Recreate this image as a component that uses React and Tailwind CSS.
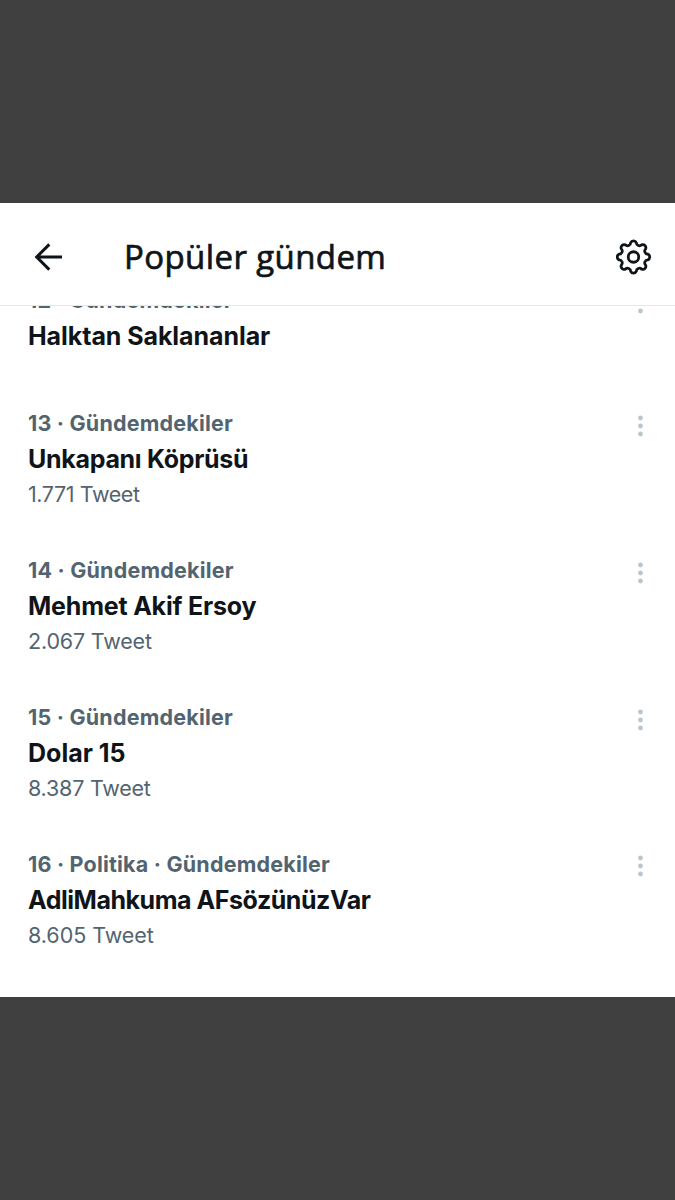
import React from 'react';

const trends = [
  { rank: '12 · Gündemdekiler', name: 'Halktan Saklananlar', nameTracking: 'tracking-[-0.07px]' },
  { rank: '13 · Gündemdekiler', name: 'Unkapanı Köprüsü', count: '1.771 Tweet', nameTracking: 'tracking-[-0.3px]', countTracking: 'tracking-[-0.4px]' },
  { rank: '14 · Gündemdekiler', name: 'Mehmet Akif Ersoy', count: '2.067 Tweet', nameTracking: 'tracking-[-0.2px]', countTracking: 'tracking-[-0.18px]' },
  { rank: '15 · Gündemdekiler', name: 'Dolar 15', count: '8.387 Tweet', nameTracking: 'tracking-[0px]', countTracking: 'tracking-[-0.22px]' },
  { rank: '16 · Politika · Gündemdekiler', name: 'AdliMahkuma AFsözünüzVar', count: '8.605 Tweet', nameTracking: 'tracking-[-0.46px]', countTracking: 'tracking-[-0.05px]' },
];

const BackIcon = () => (
  <svg className="w-7 h-7 shrink-0" viewBox="0 0 28 28" fill="none" stroke="#0f1419" strokeWidth="3">
    <path d="M15.3 1.4 2.7 14l12.6 12.6M2.7 14H28" />
  </svg>
);

const GearIcon = () => (
  <svg className="w-9 h-9 shrink-0" viewBox="-17 -17.5 35 35" fill="none" stroke="#0f1419" strokeWidth="2.7">
    <path
      strokeLinejoin="round"
      d="M13.93-2.77A3 3 0 0 1 13.93 2.77A3 3 0 0 0 11.81 7.89A3 3 0 0 1 7.89 11.81A3 3 0 0 0 2.77 13.93A3 3 0 0 1-2.77 13.93A3 3 0 0 0-7.89 11.81A3 3 0 0 1-11.81 7.89A3 3 0 0 0-13.93 2.77A3 3 0 0 1-13.93-2.77A3 3 0 0 0-11.81-7.89A3 3 0 0 1-7.89-11.81A3 3 0 0 0-2.77-13.93A3 3 0 0 1 2.77-13.93A3 3 0 0 0 7.89-11.81A3 3 0 0 1 11.81-7.89A3 3 0 0 0 13.93-2.77Z"
    />
    <circle r="5.1" />
  </svg>
);

const MoreIcon = () => (
  <svg className="w-[6px] h-[22px] shrink-0 mt-[6.5px]" viewBox="0 0 6 22" fill="#b9c6cd">
    <circle cx="3.5" cy="3" r="2.4" />
    <circle cx="3.5" cy="11" r="2.4" />
    <circle cx="3.5" cy="19" r="2.4" />
  </svg>
);

const Trend = ({ trend }) => (
  <li className="flex justify-between items-start pl-[28px] pr-[32px]">
    <div className="whitespace-nowrap">
      <p className="text-[21.5px] leading-[30px] font-bold text-[#536471] tracking-[0.2px]">{trend.rank}</p>
      <h2 className={`text-[25px] leading-[42px] font-bold text-[#0f1419] ${trend.nameTracking}`}>{trend.name}</h2>
      {trend.count ? (
        <p className={`text-[21.5px] leading-[29px] text-[#536471] ${trend.countTracking}`}>{trend.count}</p>
      ) : (
        <div className="h-[5.7px]" />
      )}
    </div>
    <MoreIcon />
  </li>
);

const App = () => {
  return (
    <div className="h-[1200px] w-[675px] bg-[#404040] pt-[203px] overflow-hidden font-['Inter',sans-serif]">
      <main className="h-[794px] bg-white flex flex-col">
        <header className="h-[103px] shrink-0 flex items-center border-b border-[#e3e9ec] pl-[34px] pr-[23px] pt-[6px]">
          <BackIcon />
          <h1 className="ml-[62px] grow text-[33px] leading-[46px] font-normal tracking-[0.4px] text-[#0f1419] font-['Open_Sans',sans-serif] [-webkit-text-stroke:0.7px_#0f1419]">
            Popüler gündem
          </h1>
          <GearIcon />
        </header>
        <div className="grow overflow-hidden">
          <ul className="-mt-[21px] flex flex-col gap-[45.8px]">
            {trends.map((trend) => (
              <Trend key={trend.name} trend={trend} />
            ))}
          </ul>
        </div>
      </main>
    </div>
  );
};

export default App;
